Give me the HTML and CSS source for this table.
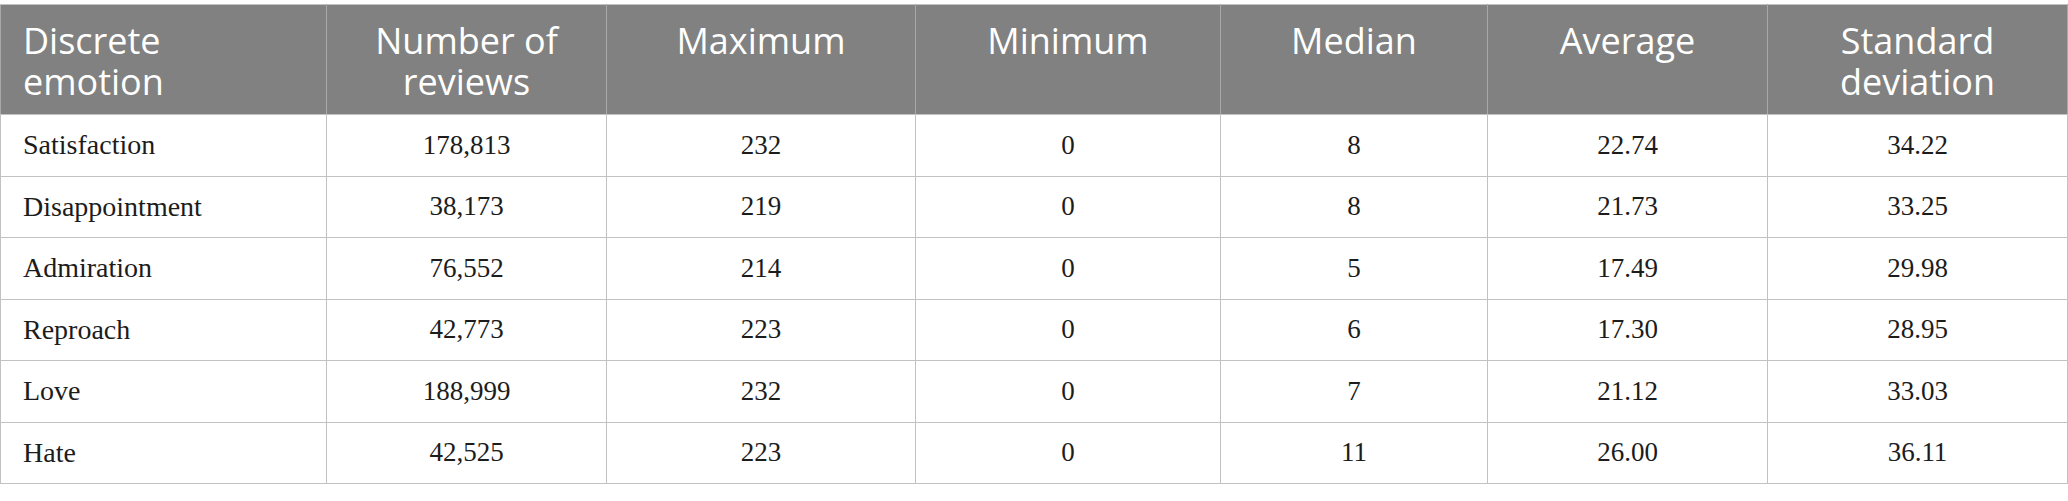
FILE: index.html
```html
<!DOCTYPE html>
<html lang="en">
<head>
<meta charset="utf-8">
<title>Discrete emotion statistics</title>
<link rel="stylesheet" href="styles.css">
</head>
<body>
<div class="wrap">
<table class="stats">
  <colgroup>
    <col class="c1"><col class="c2"><col class="c3"><col class="c4"><col class="c5"><col class="c6"><col class="c7">
  </colgroup>
  <thead>
    <tr>
      <th class="first">Discrete<br>emotion</th>
      <th>Number of<br>reviews</th>
      <th>Maximum</th>
      <th>Minimum</th>
      <th>Median</th>
      <th>Average</th>
      <th>Standard<br>deviation</th>
    </tr>
  </thead>
  <tbody>
    <tr><td class="first">Satisfaction</td><td>178,813</td><td>232</td><td>0</td><td>8</td><td>22.74</td><td>34.22</td></tr>
    <tr><td class="first">Disappointment</td><td>38,173</td><td>219</td><td>0</td><td>8</td><td>21.73</td><td>33.25</td></tr>
    <tr><td class="first">Admiration</td><td>76,552</td><td>214</td><td>0</td><td>5</td><td>17.49</td><td>29.98</td></tr>
    <tr><td class="first">Reproach</td><td>42,773</td><td>223</td><td>0</td><td>6</td><td>17.30</td><td>28.95</td></tr>
    <tr><td class="first">Love</td><td>188,999</td><td>232</td><td>0</td><td>7</td><td>21.12</td><td>33.03</td></tr>
    <tr><td class="first">Hate</td><td>42,525</td><td>223</td><td>0</td><td>11</td><td>26.00</td><td>36.11</td></tr>
  </tbody>
</table>
</div>
</body>
</html>
```

FILE: styles.css
```css
html, body {
  margin: 0;
  padding: 0;
  background: #ffffff;
}

.wrap {
  padding-top: 4px;
}

.stats {
  width: 2067px;
  border-collapse: collapse;
  table-layout: fixed;
  border: 1px solid #c2c2c2;
}

.c1 { width: 326px; }
.c2 { width: 280px; }
.c3 { width: 309px; }
.c4 { width: 305px; }
.c5 { width: 267px; }
.c6 { width: 280px; }
.c7 { width: 300px; }

.stats th {
  background: #808180;
  color: #ffffff;
  font-family: "Open Sans", "Noto Sans", sans-serif;
  font-weight: 400;
  font-size: 36px;
  line-height: 41px;
  text-align: center;
  vertical-align: top;
  padding: 15px 10px 12px;
  border: 1px solid #a9a9a9;
  border-bottom-color: #c2c2c2;
  border-top-color: #c2c2c2;
}

.stats th.first {
  text-align: left;
  padding-left: 22px;
}

.stats td {
  height: 60.5px;
  padding: 0 10px;
  font-family: "Liberation Serif", "Times New Roman", serif;
  font-size: 27px;
  color: #1c1c1c;
  text-align: center;
  vertical-align: middle;
  border: 1px solid #c2c2c2;
}

.stats td.first {
  text-align: left;
  padding-left: 22px;
  font-size: 28px;
}
```
